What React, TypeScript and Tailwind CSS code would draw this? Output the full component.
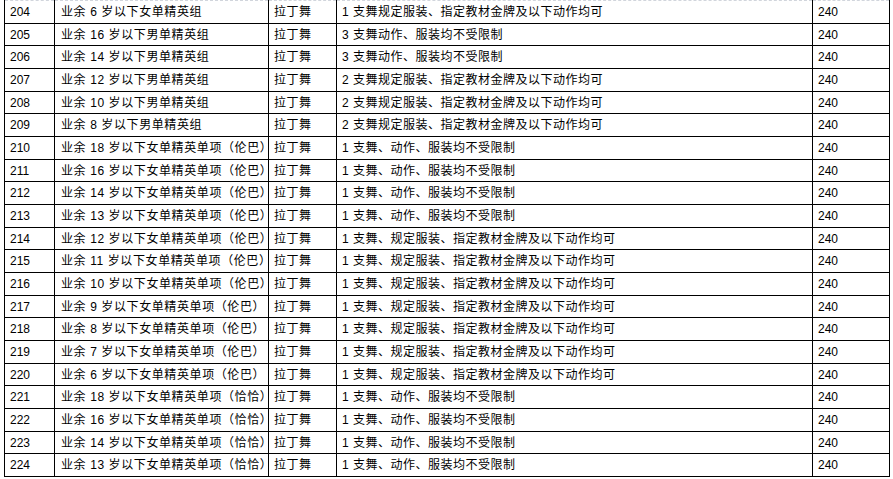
const elite = (age: number, gender: string) => `业余 ${age} 岁以下${gender}单精英组`;
const single = (age: number, dance: string) => `业余 ${age} 岁以下女单精英单项（${dance}）`;

const FREE = "1 支舞、动作、服装均不受限制";
const SET = "1 支舞、规定服装、指定教材金牌及以下动作均可";

const rows: [number, string, string][] = [
  [204, elite(6, "女"), "1 支舞规定服装、指定教材金牌及以下动作均可"],
  [205, elite(16, "男"), "3 支舞动作、服装均不受限制"],
  [206, elite(14, "男"), "3 支舞动作、服装均不受限制"],
  [207, elite(12, "男"), "2 支舞规定服装、指定教材金牌及以下动作均可"],
  [208, elite(10, "男"), "2 支舞规定服装、指定教材金牌及以下动作均可"],
  [209, elite(8, "男"), "2 支舞规定服装、指定教材金牌及以下动作均可"],
  [210, single(18, "伦巴"), FREE],
  [211, single(16, "伦巴"), FREE],
  [212, single(14, "伦巴"), FREE],
  [213, single(13, "伦巴"), FREE],
  [214, single(12, "伦巴"), SET],
  [215, single(11, "伦巴"), SET],
  [216, single(10, "伦巴"), SET],
  [217, single(9, "伦巴"), SET],
  [218, single(8, "伦巴"), SET],
  [219, single(7, "伦巴"), SET],
  [220, single(6, "伦巴"), SET],
  [221, single(18, "恰恰"), FREE],
  [222, single(16, "恰恰"), FREE],
  [223, single(14, "恰恰"), FREE],
  [224, single(13, "恰恰"), FREE],
];

export default function App() {
  return (
    <main className="min-h-screen bg-white pl-1 font-['Liberation_Sans','Noto_Sans_CJK_SC',sans-serif] text-[12px] leading-none text-black">
      <table className="w-[885px] table-fixed border-collapse border-t border-dashed border-t-gray-300">
        <colgroup>
          <col className="w-[50px]" />
          <col className="w-[214px]" />
          <col className="w-[68px]" />
          <col className="w-[476px]" />
          <col className="w-[77px]" />
        </colgroup>
        <tbody>
          {rows.map(([no, name, rule], i) => (
            <tr key={no} className={i % 3 === 1 ? "h-[22px]" : "h-[23px]"}>
              <td className="border-x border-b border-black pl-[5px] align-middle">{no}</td>
              <td className="border-x border-b border-black pl-[6px] align-middle whitespace-nowrap tracking-[0.6px]">{name}</td>
              <td className="border-x border-b border-black pl-[5px] align-middle tracking-[0.5px]">拉丁舞</td>
              <td className="border-x border-b border-black pl-[5px] align-middle whitespace-nowrap tracking-[0.5px]">{rule}</td>
              <td className="border-x border-b border-black pl-[5px] align-middle">240</td>
            </tr>
          ))}
        </tbody>
      </table>
    </main>
  );
}
